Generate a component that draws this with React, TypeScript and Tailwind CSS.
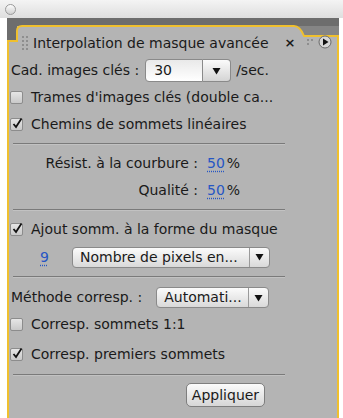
import React from 'react';

const font = { fontFamily: '"DejaVu Sans", "Liberation Sans", sans-serif' };

function Check({ checked }: { checked?: boolean }) {
  return (
    <span className="relative -ml-[1px] mr-[8px] flex h-[13px] w-[13px] shrink-0 items-center justify-center rounded-[2px] border border-[#8c8c8c] bg-gradient-to-b from-[#e6e6e6] to-[#c9c9c9]">
      {checked && (
        <svg width="11" height="11" viewBox="0 0 11 11" className="absolute -top-[1px] left-[1px]">
          <path d="M1.5 6 L4 9 L9.5 0.5" stroke="#111" strokeWidth="1.8" fill="none" />
        </svg>
      )}
    </span>
  );
}

function Arrow() {
  return (
    <svg width="9" height="8" viewBox="0 0 9 8">
      <path d="M0.5 1 H8.5 L4.5 7.5 Z" fill="#111" />
    </svg>
  );
}

function Select({ label, width }: { label: string; width: string }) {
  return (
    <div className={`flex h-[21px] items-stretch rounded-[4px] border border-[#8a8a8a] bg-gradient-to-b from-[#fbfbfb] to-[#d9d9d9] ${width}`}>
      <span className="flex-1 truncate pl-[7px] leading-[19px]">{label}</span>
      <span className="flex w-[20px] items-center justify-center border-l border-[#9a9a9a]">
        <Arrow />
      </span>
    </div>
  );
}

function Separator({ mt }: { mt: string }) {
  return (
    <div className={`${mt} ml-[2px] w-[272px]`}>
      <div className="h-px bg-[#7a7a7a]" />
      <div className="h-px bg-[#c2c2c2]" />
    </div>
  );
}

function Value({ v }: { v: string }) {
  return (
    <span className="text-[#2656c4] underline decoration-dotted decoration-[#2656c4] underline-offset-[3px]">{v}</span>
  );
}

export default function App() {
  return (
    <div className="relative h-[418px] w-[343px] overflow-hidden bg-white text-[14px] text-[#1a1a1a]" style={font}>
      {/* window top strip */}
      <div className="flex h-[18px] items-center bg-gradient-to-b from-[#f4f4f4] to-[#dedede] pl-[5px]">
        <span className="h-[11px] w-[11px] rounded-full border border-[#9a9a9a] bg-gradient-to-b from-[#fdfdfd] to-[#cfcfcf]" />
      </div>

      <div className="ml-[7px] w-[332px]">
        {/* tab header */}
        <div className="relative h-[35px] bg-[#b4b4b4]">
          <svg width="332" height="35" className="absolute inset-0">
            <rect x="0" y="0" width="332" height="8" fill="#6d6d6d" />
            <rect x="0" y="0" width="10" height="23" fill="#6d6d6d" />
            <path d="M287 8 Q293 8 297 18 L332 18 L332 8 Z" fill="#858585" />
            <path d="M1 35 V23 H10 V13 Q10 8 15 8 H287 Q293 8 297 18 H331 V35" stroke="#f0c02e" strokeWidth="2" fill="none" />
            <g fill="#8e8e8e">
              <rect x="15" y="18" width="2" height="2" />
              <rect x="19" y="18" width="2" height="2" />
              <rect x="15" y="22" width="2" height="2" />
              <rect x="19" y="22" width="2" height="2" />
              <rect x="15" y="26" width="2" height="2" />
              <rect x="19" y="26" width="2" height="2" />
              <rect x="15" y="30" width="2" height="2" />
              <rect x="19" y="30" width="2" height="2" />
              <rect x="300" y="21" width="2" height="2" />
              <rect x="304" y="21" width="2" height="2" />
              <rect x="300" y="25" width="2" height="2" />
            </g>
            <circle cx="318" cy="24" r="6" fill="#d6d6d6" stroke="#6a6a6a" />
            <path d="M316 20.5 L321.5 24 L316 27.5 Z" fill="#111" />
          </svg>
          <div className="relative top-[17px] flex h-[16px] items-center pl-[26px] leading-[16px]">
            <span>Interpolation de masque avancée</span>
            <span className="ml-[16px] text-[13px] font-bold">×</span>
          </div>
        </div>

        {/* body */}
        <div className="flex h-[365px] flex-col border-l-2 border-r-2 border-[#f0c02e] bg-[#b4b4b4] pl-[2px] pt-[4px]">
          <div className="flex h-[27px] items-center">
            <span>Cad. images clés :</span>
            <div className="ml-[6px] flex h-[23px] w-[86px] items-stretch">
              <span className="flex-1 rounded-l-[4px] border border-[#8a8a8a] bg-gradient-to-b from-[#e9e9e9] to-white pl-[8px] leading-[21px]">30</span>
              <span className="flex w-[28px] items-center justify-center rounded-r-[4px] border border-l-0 border-[#8a8a8a] bg-gradient-to-b from-[#fbfbfb] to-[#d4d4d4]">
                <Arrow />
              </span>
            </div>
            <span className="ml-[5px]">/sec.</span>
          </div>
          <div className="flex h-[27px] items-center">
            <Check />
            <span>Trames d'images clés (double ca...</span>
          </div>
          <div className="flex h-[27px] items-center">
            <Check checked />
            <span>Chemins de sommets linéaires</span>
          </div>

          <Separator mt="mt-[5px]" />

          <div className="mt-[5px] flex h-[27px] items-center">
            <span className="w-[187px] text-right">Résist. à la courbure :</span>
            <span className="ml-[9px]"><Value v="50" /></span>
            <span className="ml-[2px]">%</span>
          </div>
          <div className="flex h-[27px] items-center">
            <span className="w-[187px] text-right">Qualité :</span>
            <span className="ml-[9px]"><Value v="50" /></span>
            <span className="ml-[2px]">%</span>
          </div>

          <Separator mt="mt-[5px]" />

          <div className="mt-[5px] flex h-[27px] items-center">
            <Check checked />
            <span>Ajout somm. à la forme du masque</span>
          </div>
          <div className="flex h-[28px] items-center">
            <span className="ml-[29px] w-[32px]"><Value v="9" /></span>
            <Select label="Nombre de pixels en..." width="w-[198px]" />
          </div>

          <Separator mt="mt-[5px]" />

          <div className="mt-[6px] flex h-[27px] items-center">
            <span>Méthode corresp. :</span>
            <span className="ml-[14px]">
              <Select label="Automati..." width="w-[113px]" />
            </span>
          </div>
          <div className="flex h-[27px] items-center">
            <Check />
            <span>Corresp. sommets 1:1</span>
          </div>
          <div className="mt-[3px] flex h-[27px] items-center">
            <Check checked />
            <span>Corresp. premiers sommets</span>
          </div>

          <Separator mt="mt-[6px]" />

          <div className="mt-[7px] flex w-[254px] justify-end">
            <button className="h-[24px] w-[79px] rounded-[5px] border border-[#7e7e7e] bg-gradient-to-b from-[#fbfbfb] to-[#d6d6d6] leading-[22px]">
              Appliquer
            </button>
          </div>
        </div>
      </div>
    </div>
  );
}
